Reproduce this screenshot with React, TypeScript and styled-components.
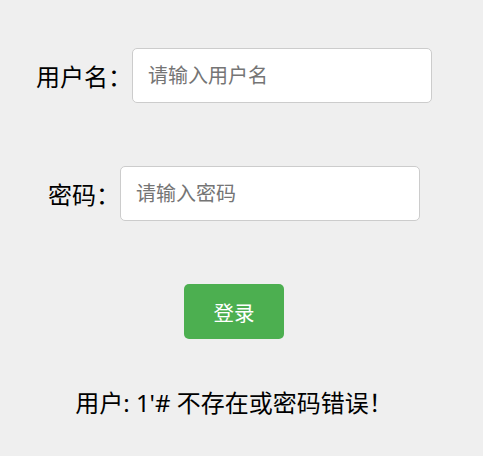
import React from "react";
import styled, { createGlobalStyle } from "styled-components";

const Global = createGlobalStyle`
  html, body {
    margin: 0;
    padding: 0;
    background: #efefef;
  }
  body {
    font-family: "Noto Sans", "Noto Sans CJK SC", sans-serif;
    color: #000;
  }
`;

const Page = styled.div`
  width: 468px;
  padding-top: 48px;
  display: flex;
  flex-direction: column;
  align-items: center;
`;

const Row = styled.div<{ $top?: number }>`
  display: flex;
  align-items: center;
  margin-top: ${(p) => p.$top ?? 0}px;
`;

const Label = styled.label`
  font-family: "Noto Sans CJK SC", sans-serif;
  font-size: 24px;
  line-height: 30px;
  white-space: nowrap;
`;

const Input = styled.input`
  box-sizing: border-box;
  width: 300px;
  height: 55px;
  padding: 0 15px;
  border: 1px solid #cccccc;
  border-radius: 5px;
  background: #fff;
  font-family: "Noto Sans", "Noto Sans CJK SC", sans-serif;
  font-size: 20px;
  color: #333;
  outline: none;
  &::placeholder {
    color: #757575;
  }
`;

const Button = styled.button`
  box-sizing: border-box;
  margin-top: 63px;
  width: 100px;
  height: 55px;
  border: none;
  border-radius: 5px;
  background: #4caf50;
  color: #fff;
  font-family: "Noto Sans", "Noto Sans CJK SC", sans-serif;
  font-size: 20.5px;
  cursor: pointer;
`;

const Message = styled.p`
  margin: 49px 0 0;
  font-size: 24px;
  line-height: 30px;
`;

export default function App() {
  return (
    <>
      <Global />
      <Page>
        <Row>
          <Label>用户名：</Label>
          <Input placeholder="请输入用户名" />
        </Row>
        <Row $top={63}>
          <Label>密码：</Label>
          <Input type="password" placeholder="请输入密码" />
        </Row>
        <Button>登录</Button>
        <Message>用户: 1'# 不存在或密码错误！</Message>
      </Page>
    </>
  );
}
